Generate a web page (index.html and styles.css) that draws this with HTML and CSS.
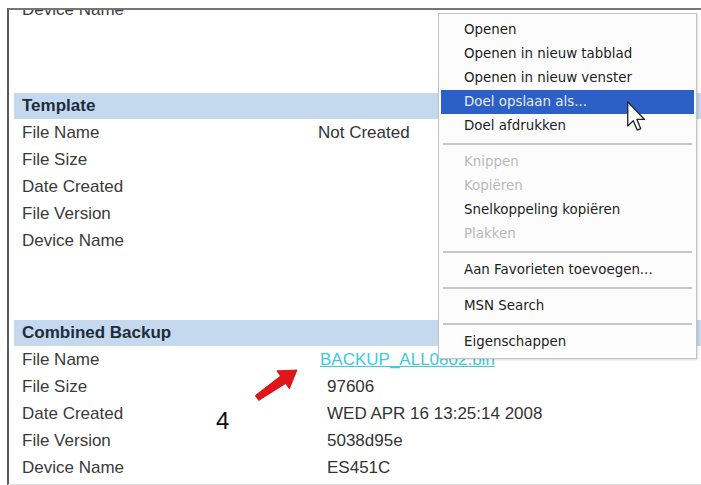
FILE: index.html
```html
<!DOCTYPE html>
<html>
<head>
<meta charset="utf-8">
<link rel="stylesheet" href="styles.css">
</head>
<body>
<div class="frame">
  <div class="content">
    <div class="row"><span class="label">Device Name</span><span class="value"></span></div>
    <div class="gap first"></div>

    <div class="bar">Template</div>
    <div class="row"><span class="label">File Name</span><span class="value">Not Created</span></div>
    <div class="row"><span class="label">File Size</span><span class="value"></span></div>
    <div class="row"><span class="label">Date Created</span><span class="value"></span></div>
    <div class="row"><span class="label">File Version</span><span class="value"></span></div>
    <div class="row"><span class="label">Device Name</span><span class="value"></span></div>
    <div class="gap"></div>

    <div class="bar">Combined Backup</div>
    <div class="row"><span class="label">File Name</span><span class="value"><a class="link" href="#">BACKUP_ALL0802.bin</a></span></div>
    <div class="row"><span class="label">File Size</span><span class="value pad">97606</span></div>
    <div class="row"><span class="label">Date Created</span><span class="value pad">WED APR 16 13:25:14 2008</span></div>
    <div class="row"><span class="label">File Version</span><span class="value pad">5038d95e</span></div>
    <div class="row"><span class="label">Device Name</span><span class="value pad">ES451C</span></div>
  </div>
</div>

<svg class="arrow" width="60" height="45" viewBox="0 0 60 45">
  <polygon points="10.3,35.5 35.5,16.1 31.8,10.8 52,10 44.4,28.8 40.7,23.5 13.7,40.5" fill="#e3151b" stroke="#b80d12" stroke-width="0.8" stroke-linejoin="round"/>
</svg>

<div class="step">4</div>

<div class="menu">
  <div class="item">Openen</div>
  <div class="item">Openen in nieuw tabblad</div>
  <div class="item">Openen in nieuw venster</div>
  <div class="item active">Doel opslaan als...</div>
  <div class="item">Doel afdrukken</div>
  <div class="sep"></div>
  <div class="item disabled">Knippen</div>
  <div class="item disabled">Kopiëren</div>
  <div class="item">Snelkoppeling kopiëren</div>
  <div class="item disabled">Plakken</div>
  <div class="sep"></div>
  <div class="item">Aan Favorieten toevoegen...</div>
  <div class="sep"></div>
  <div class="item">MSN Search</div>
  <div class="sep"></div>
  <div class="item">Eigenschappen</div>
</div>

<svg class="cursor" width="19" height="31" viewBox="0 0 13 21">
  <polygon points="0.5,0.5 0.5,17 4.3,13.4 7,19.8 9.4,18.8 6.8,12.5 12,12.5" fill="#ffffff" stroke="#222" stroke-width="0.9" stroke-linejoin="round"/>
</svg>
</body>
</html>
```

FILE: styles.css
```css
html, body {
  margin: 0;
  padding: 0;
  background: #ffffff;
  width: 701px;
  height: 485px;
  overflow: hidden;
}

body {
  position: relative;
  font-family: "Liberation Sans", Arial, sans-serif;
}

.frame {
  margin: 8px 0 0 7px;
  height: 474px;
  border-top: 2px solid #767676;
  border-left: 2px solid #5a5a5a;
  border-bottom: 1px solid #e2e2e2;
  padding-left: 5px;
  overflow: hidden;
}

.content {
  margin-top: -14px;
}

.row {
  display: grid;
  grid-template-columns: 296px 1fr;
  height: 27px;
  line-height: 27px;
  padding-left: 8px;
  font-size: 17px;
  color: #3a3a3a;
  white-space: nowrap;
}

.value {
  color: #333333;
}

.value.pad {
  padding-left: 9px;
}

.gap {
  height: 66px;
}

.gap.first {
  height: 70px;
}

.bar {
  height: 26px;
  line-height: 26px;
  background: #c5d9ee;
  padding-left: 8px;
  font-size: 17px;
  font-weight: bold;
  color: #1e2c3c;
}

.link {
  margin-left: 2px;
  color: #3ccbdc;
  text-decoration: underline;
}

.arrow {
  position: absolute;
  left: 245px;
  top: 360px;
}

.step {
  position: absolute;
  left: 216px;
  top: 406px;
  font-size: 24px;
  line-height: 30px;
  color: #111111;
}

.menu {
  position: absolute;
  left: 438px;
  top: 13px;
  width: 259px;
  box-sizing: border-box;
  padding: 4px 2px;
  background: #fcfcfc;
  border: 1px solid #c4c4c4;
  box-shadow: 1px 1px 2px rgba(0, 0, 0, 0.15);
  font-family: "DejaVu Sans", Verdana, sans-serif;
  font-size: 13.4px;
  color: #1c1c1c;
}

.item {
  height: 24px;
  line-height: 24px;
  padding-left: 23px;
  white-space: nowrap;
}

.item.active {
  background: #2c60c6;
  color: #e4ecfb;
}

.item.disabled {
  color: #b9b9b9;
}

.sep {
  height: 12px;
  margin: 0 2px;
  background: linear-gradient(#fcfcfc 0, #fcfcfc 5px, #c6c6c6 5px, #c6c6c6 7px, #fcfcfc 7px);
}

.cursor {
  position: absolute;
  left: 627px;
  top: 101px;
}
```
